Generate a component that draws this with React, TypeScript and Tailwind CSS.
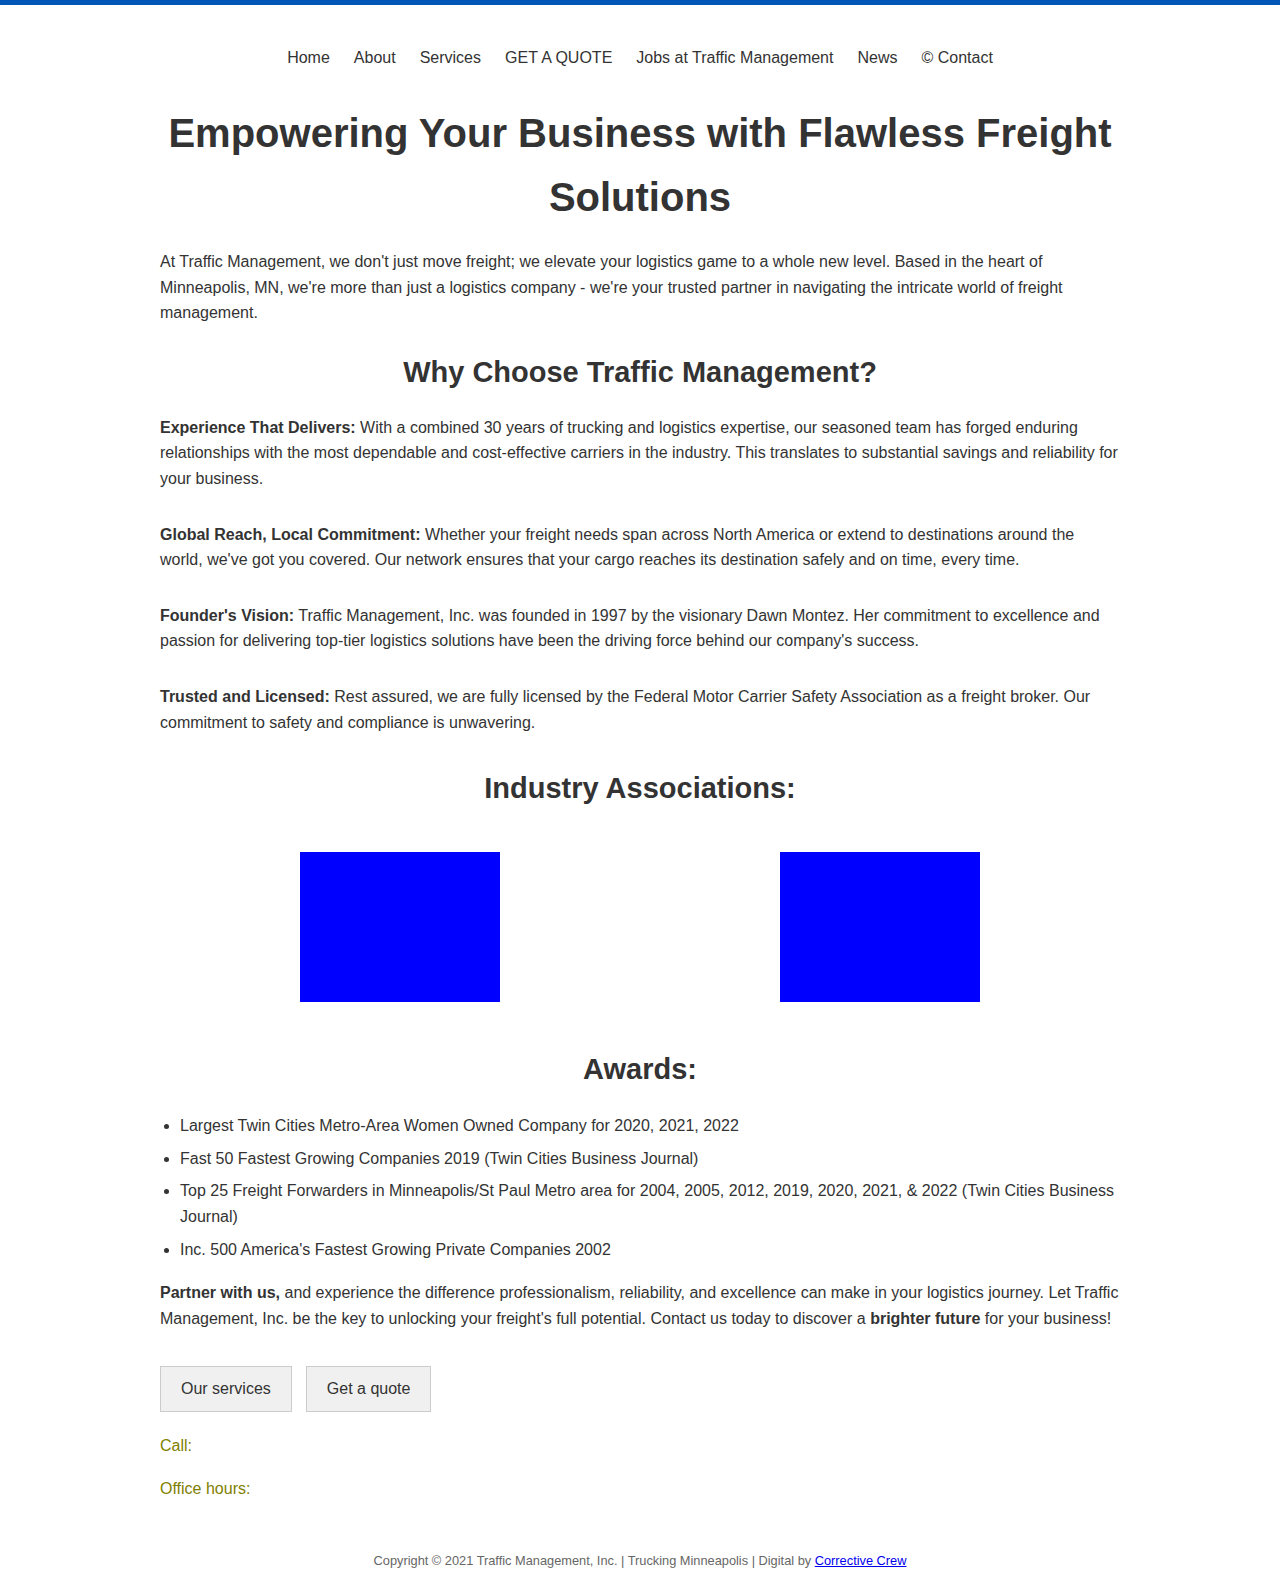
import React from "react";

const nav = ["Home", "About", "Services", "GET A QUOTE", "Jobs at Traffic Management", "News", "© Contact"];

export default function App() {
  return (
    <div className="min-h-[1591px] bg-white text-[#333333]" style={{ fontFamily: '"Liberation Sans", Arial, sans-serif' }}>
      <div className="h-[5px] bg-[#0057b5]" />
      <nav className="flex justify-center gap-[24px] pt-[43px] text-[16px] leading-[20px] text-[#333333]">
        {nav.map((n) => (
          <a key={n} href="#" className="text-[#333333]">{n}</a>
        ))}
      </nav>
      <main className="mx-auto w-[960px] pt-[33px]">
        <h1 className="text-center text-[40px] font-bold leading-[64px]">
          Empowering Your Business with Flawless Freight Solutions
        </h1>
        <p className="mt-[20px] text-[16px] leading-[25.6px]">
          At Traffic Management, we don't just move freight; we elevate your logistics game to a whole new level. Based in the heart of Minneapolis, MN, we're more than just a logistics company - we're your trusted partner in navigating the intricate world of freight management.
        </p>
        <h2 className="mt-[26px] text-center text-[29px] font-bold leading-[40px]">Why Choose Traffic Management?</h2>
        <div className="mt-[23px] flex flex-col gap-[30px] text-[16px] leading-[25.6px]">
          <p><strong>Experience That Delivers:</strong> With a combined 30 years of trucking and logistics expertise, our seasoned team has forged enduring relationships with the most dependable and cost-effective carriers in the industry. This translates to substantial savings and reliability for your business.</p>
          <p><strong>Global Reach, Local Commitment:</strong> Whether your freight needs span across North America or extend to destinations around the world, we've got you covered. Our network ensures that your cargo reaches its destination safely and on time, every time.</p>
          <p><strong>Founder's Vision:</strong> Traffic Management, Inc. was founded in 1997 by the visionary Dawn Montez. Her commitment to excellence and passion for delivering top-tier logistics solutions have been the driving force behind our company's success.</p>
          <p><strong>Trusted and Licensed:</strong> Rest assured, we are fully licensed by the Federal Motor Carrier Safety Association as a freight broker. Our commitment to safety and compliance is unwavering.</p>
        </div>
        <h2 className="mt-[33px] text-center text-[29px] font-bold leading-[40px]">Industry Associations:</h2>
        <div className="mt-[44px] grid grid-cols-2">
          <div className="flex justify-center"><div className="h-[150px] w-[200px] bg-[#0000ff]" /></div>
          <div className="flex justify-center"><div className="h-[150px] w-[200px] bg-[#0000ff]" /></div>
        </div>
        <h2 className="mt-[47px] text-center text-[29px] font-bold leading-[40px]">Awards:</h2>
        <ul className="mt-[24px] list-disc pl-[20px] text-[16px] leading-[25.6px]">
          <li className="mb-[7px]">Largest Twin Cities Metro-Area Women Owned Company for 2020, 2021, 2022</li>
          <li className="mb-[7px]">Fast 50 Fastest Growing Companies 2019 (Twin Cities Business Journal)</li>
          <li className="mb-[7px]">Top 25 Freight Forwarders in Minneapolis/St Paul Metro area for 2004, 2005, 2012, 2019, 2020, 2021, &amp; 2022 (Twin Cities Business Journal)</li>
          <li className="mb-[7px]">Inc. 500 America's Fastest Growing Private Companies 2002</li>
        </ul>
        <p className="mt-[18px] text-[16px] leading-[25.6px]">
          <strong>Partner with us,</strong> and experience the difference professionalism, reliability, and excellence can make in your logistics journey. Let Traffic Management, Inc. be the key to unlocking your freight's full potential. Contact us today to discover a <strong>brighter future</strong> for your business!
        </p>
        <div className="mt-[35px] flex gap-[14px]">
          <button className="h-[46px] border border-[#cccccc] bg-[#f0f0f0] px-[20px] text-[16px] text-[#333333]">Our services</button>
          <button className="h-[46px] border border-[#cccccc] bg-[#f0f0f0] px-[20px] text-[16px] text-[#333333]">Get a quote</button>
        </div>
        <p className="mt-[24px] text-[16px] leading-[20px] text-[#808000]">Call:</p>
        <p className="mt-[23px] text-[16px] leading-[20px] text-[#808000]">Office hours:</p>
      </main>
      <footer className="pt-[54px] text-center text-[12.8px] leading-[16px] text-[#666666]">
        Copyright © 2021 Traffic Management, Inc. | Trucking Minneapolis | Digital by <a href="#" className="text-[#0000ee] underline">Corrective Crew</a>
      </footer>
    </div>
  );
}
